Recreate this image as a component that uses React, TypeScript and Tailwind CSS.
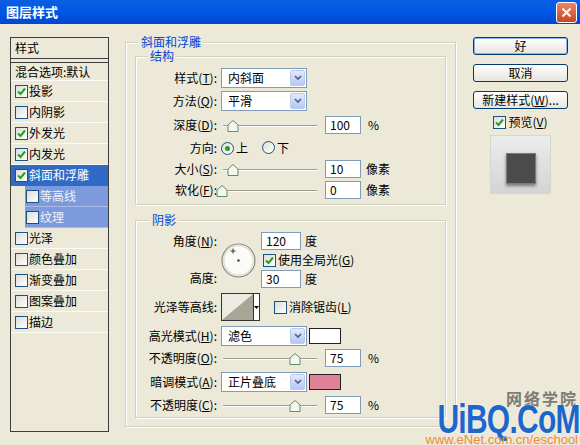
import clsx from "clsx";

const effects = [
  { name: "投影", on: true },
  { name: "内阴影" },
  { name: "外发光", on: true },
  { name: "内发光", on: true },
  { name: "斜面和浮雕", on: true, selected: true },
  { name: "等高线", sub: true },
  { name: "纹理", sub: true },
  { name: "光泽" },
  { name: "颜色叠加" },
  { name: "渐变叠加" },
  { name: "图案叠加" },
  { name: "描边" },
];

function Check({ on, className }: { on?: boolean; className?: string }) {
  return (
    <span
      className={clsx(
        "inline-flex h-[13px] w-[13px] shrink-0 items-center justify-center border border-[#1c5180] bg-linear-to-br from-[#dcdcd7] to-white",
        className
      )}
    >
      {on && (
        <svg width="9" height="9" viewBox="0 0 9 9">
          <path d="M1 4.5 L3.5 7 L8 1.5" stroke="#21a121" strokeWidth="2" fill="none" />
        </svg>
      )}
    </span>
  );
}

function Radio({ on }: { on?: boolean }) {
  return (
    <span className="inline-flex h-[13px] w-[13px] shrink-0 items-center justify-center rounded-full border border-[#1c5180] bg-linear-to-br from-[#dcdcd7] to-white">
      {on && <span className="h-[5px] w-[5px] rounded-full bg-[#21a121]" />}
    </span>
  );
}

function Select({ value }: { value: string }) {
  return (
    <div className="flex h-[20px] w-[86px] shrink-0 items-center border border-[#7f9db9] bg-white">
      <span className="flex-1 pl-[6px]">{value}</span>
      <span className="mr-[1px] flex h-[16px] w-[15px] items-center justify-center rounded-[2px] border border-[#b9c9ef] bg-linear-to-b from-[#e2eafd] to-[#b4c8f4]">
        <svg width="8" height="6" viewBox="0 0 8 6">
          <path d="M1 1 L4 4 L7 1" stroke="#4d6185" strokeWidth="1.6" fill="none" />
        </svg>
      </span>
    </div>
  );
}

function Field({ value, w = "w-[36px]" }: { value: string; w?: string }) {
  return (
    <div className={clsx("flex h-[18px] shrink-0 items-center border border-[#7f9db9] bg-white pl-[4px]", w)}>
      {value}
    </div>
  );
}

function Slider({ pos }: { pos: number }) {
  return (
    <div className="relative h-[14px] w-[96px] shrink-0">
      <div className="absolute left-[2px] right-0 top-[7px] h-[2px] border-t border-b border-t-[#9d9d92] border-b-white" />
      <svg
        className="absolute top-[2px]"
        style={{ left: pos - 6 }}
        width="12"
        height="12"
        viewBox="0 0 12 12"
      >
        <path d="M6 0.5 L11 5 L11 11.5 L1 11.5 L1 5 Z" fill="#f7f7f2" stroke="#5f8b6e" strokeWidth="1" />
      </svg>
    </div>
  );
}

function Label({ children }: { children: React.ReactNode }) {
  return <div className="w-[81px] shrink-0 text-right">{children}</div>;
}

function GroupTitle({ children, ml }: { children: React.ReactNode; ml: string }) {
  return (
    <div className={clsx("-mt-[7px] w-fit bg-[#ece9d8] px-[3px] leading-[12px] text-[#0046d5]", ml)}>
      {children}
    </div>
  );
}

const box = "border border-[#d0d0bf] shadow-[inset_1px_1px_0_#fff,1px_1px_0_#fff]";

export default function App() {
  return (
    <div className="relative h-[445px] w-[580px] overflow-hidden bg-[#ece9d8] font-['Noto_Sans_CJK_SC',sans-serif] text-[12px] leading-[14px] text-black">
      {/* title bar */}
      <div className="flex h-[24px] items-center justify-between bg-linear-to-b from-[#0b5fe3] via-[#0057e4] to-[#0046cf] pl-[6px] pr-[3px]">
        <span className="text-[13px] font-bold text-white">图层样式</span>
        <span className="flex h-[21px] w-[21px] items-center justify-center rounded-[3px] border border-white bg-linear-to-b from-[#e8866a] to-[#c8441f]">
          <svg width="11" height="11" viewBox="0 0 11 11">
            <path d="M1.5 1.5 L9.5 9.5 M9.5 1.5 L1.5 9.5" stroke="white" strokeWidth="2" />
          </svg>
        </span>
      </div>

      <div className="flex items-start pl-[10px] pt-[13px]">
        {/* effects list */}
        <div className="flex h-[395px] w-[99px] shrink-0 flex-col border border-[#3f3f3f]">
          <div className="flex h-[21px] items-center border-b border-[#3f3f3f] pl-[4px]">样式</div>
          <div className="mt-[3px] flex h-[19px] items-center border-t border-b border-t-[#3f3f3f] border-b-[#fbfaf5] pl-[4px]">
            混合选项:默认
          </div>
          {effects.map((e) => (
            <div
              key={e.name}
              className={clsx(
                "flex h-[21px] items-center gap-[1px] border-b",
                e.selected && "border-[#316ac5] bg-[#316ac5] pl-[4px] text-white",
                e.sub && "ml-[14px] border-[#a9bbe6] bg-[#7d9bdc] pl-[1px] text-[#eef2fb]",
                !e.selected && !e.sub && "border-[#fbfaf5] pl-[4px]"
              )}
            >
              <Check on={e.on} />
              <span>{e.name}</span>
            </div>
          ))}
        </div>

        {/* bevel and emboss */}
        <div className={clsx("ml-[16px] mt-[5px] w-[331px] shrink-0 px-[9px] pb-[8px]", box)}>
          <GroupTitle ml="ml-[3px]">斜面和浮雕</GroupTitle>

          <div className={clsx("mt-[8px] pb-[3px]", box)}>
            <GroupTitle ml="ml-[11px]">结构</GroupTitle>
            <div className="mt-[5px] flex flex-col">
              <div className="flex h-[22px] items-center gap-[4px]">
                <Label>
                  样式(<u>T</u>):
                </Label>
                <Select value="内斜面" />
              </div>
              <div className="flex h-[24px] items-center gap-[4px]">
                <Label>
                  方法(<u>Q</u>):
                </Label>
                <Select value="平滑" />
              </div>
              <div className="flex h-[24px] items-center gap-[4px]">
                <Label>
                  深度(<u>D</u>):
                </Label>
                <Slider pos={12} />
                <div className="ml-[4px]">
                  <Field value="100" />
                </div>
                <span className="ml-[3px]">%</span>
              </div>
              <div className="flex h-[22px] items-center gap-[4px]">
                <Label>方向:</Label>
                <Radio on />
                <span className="-ml-[2px]">上</span>
                <span className="ml-[10px]">
                  <Radio />
                </span>
                <span className="-ml-[2px]">下</span>
              </div>
              <div className="flex h-[20px] items-center gap-[4px]">
                <Label>
                  大小(<u>S</u>):
                </Label>
                <Slider pos={12} />
                <div className="ml-[4px]">
                  <Field value="10" />
                </div>
                <span className="ml-[1px]">像素</span>
              </div>
              <div className="flex h-[22px] items-center gap-[4px]">
                <Label>
                  软化(<u>F</u>):
                </Label>
                <Slider pos={1} />
                <div className="ml-[4px]">
                  <Field value="0" />
                </div>
                <span className="ml-[1px]">像素</span>
              </div>
            </div>
          </div>

          <div className={clsx("mt-[15px] pb-[1px]", box)}>
            <GroupTitle ml="ml-[13px]">阴影</GroupTitle>
            <div className="mt-[5px] flex flex-col">
              <div className="flex h-[57px] items-start">
                <div className="flex h-[57px] w-[81px] flex-col justify-between">
                  <div className="flex h-[20px] items-center justify-end">
                    角度(<u>N</u>):
                  </div>
                  <div className="flex h-[20px] items-center justify-end">高度:</div>
                </div>
                <svg className="ml-[4px] mt-[12px]" width="35" height="35" viewBox="0 0 35 35">
                  <circle cx="17.5" cy="17.5" r="16.5" fill="#fbfbf8" stroke="#8a8a80" strokeWidth="1.2" />
                  <circle cx="17.5" cy="17.5" r="14.8" fill="none" stroke="#e2e0d6" strokeWidth="1.5" />
                  <rect x="16.5" y="16.5" width="2" height="2" fill="#111" />
                  <path d="M12 5.5 V10.5 M9.5 8 H14.5" stroke="#333" strokeWidth="1" />
                </svg>
                <div className="ml-[5px] flex flex-col pt-[1px]">
                  <div className="flex items-center">
                    <Field value="120" w="w-[40px]" />
                    <span className="ml-[4px]">度</span>
                  </div>
                  <div className="flex h-[20px] items-center gap-[2px] pl-[2px]">
                    <Check on />
                    <span>
                      使用全局光(<u>G</u>)
                    </span>
                  </div>
                  <div className="flex items-center">
                    <Field value="30" w="w-[40px]" />
                    <span className="ml-[4px]">度</span>
                  </div>
                </div>
              </div>

              <div className="mt-[4px] flex h-[30px] items-center gap-[4px]">
                <Label>光泽等高线:</Label>
                <div className="flex h-[28px] items-stretch border border-[#333]">
                  <svg width="31" height="26" viewBox="0 0 31 26">
                    <rect width="31" height="26" fill="#ecebe2" />
                    <polygon points="0,26 31,0 31,26" fill="#a8a597" />
                  </svg>
                  <div className="flex w-[6px] items-center justify-center border-l border-[#333] bg-white">
                    <svg width="5" height="3" viewBox="0 0 5 3">
                      <polygon points="0,0 5,0 2.5,3" fill="#000" />
                    </svg>
                  </div>
                </div>
                <div className="ml-[10px] flex items-center gap-[2px]">
                  <Check />
                  <span>
                    消除锯齿(<u>L</u>)
                  </span>
                </div>
              </div>

              <div className="mt-[3px] flex h-[22px] items-center gap-[4px]">
                <Label>
                  高光模式(<u>H</u>):
                </Label>
                <Select value="滤色" />
                <div className="-ml-[2px] h-[16px] w-[32px] border border-[#222] bg-white" />
              </div>
              <div className="flex h-[22px] items-center gap-[4px]">
                <Label>
                  不透明度(<u>O</u>):
                </Label>
                <Slider pos={74} />
                <div className="ml-[4px]">
                  <Field value="75" />
                </div>
                <span className="ml-[3px]">%</span>
              </div>
              <div className="mt-[2px] flex h-[22px] items-center gap-[4px]">
                <Label>
                  暗调模式(<u>A</u>):
                </Label>
                <Select value="正片叠底" />
                <div className="-ml-[2px] h-[16px] w-[32px] border border-[#222] bg-[#df8197]" />
              </div>
              <div className="mt-[1px] flex h-[22px] items-center gap-[4px]">
                <Label>
                  不透明度(<u>C</u>):
                </Label>
                <Slider pos={74} />
                <div className="ml-[4px]">
                  <Field value="75" />
                </div>
                <span className="ml-[3px]">%</span>
              </div>
            </div>
          </div>
        </div>

        {/* buttons */}
        <div className="ml-[17px] flex w-[95px] shrink-0 flex-col">
          <button className="h-[18px] w-full rounded-[3px] border border-[#003c74] bg-linear-to-b from-white to-[#e6e5de] shadow-[inset_0_0_0_1px_#8db2ee]">
            好
          </button>
          <button className="mt-[9px] h-[18px] w-full rounded-[3px] border border-[#003c74] bg-linear-to-b from-white to-[#e6e5de]">
            取消
          </button>
          <button className="mt-[9px] h-[18px] w-full rounded-[3px] border border-[#003c74] bg-linear-to-b from-white to-[#e6e5de]">
            新建样式(<u>W</u>)...
          </button>
          <div className="mt-[6px] flex h-[14px] items-center justify-center gap-[2px]">
            <Check on />
            <span>
              预览(<u>V</u>)
            </span>
          </div>
          <div className="mx-auto mt-[6px] flex h-[59px] w-[61px] justify-center border border-[#d6d6d0] bg-linear-to-b from-[#ececec] to-[#d4d4d4] pt-[17px]">
            <div className="h-[31px] w-[30px] border border-[#7a7a7a] bg-[#4b4b4b] shadow-[0_2px_3px_rgba(0,0,0,0.45)]" />
          </div>
        </div>
      </div>

      {/* watermark */}
      <div className="absolute bottom-0 right-0 flex h-[48px] w-[160px] flex-col items-end">
        <span className="absolute right-[2px] top-[-8px] text-[16px] leading-[18px] font-bold tracking-[2px] text-[#7c7c78]">
          网络学院
        </span>
        <span className="relative mt-[8px] origin-right scale-x-75 font-['Liberation_Sans',sans-serif] text-[40px] leading-[28px] font-bold tracking-[-1px] text-[#1d66cc] [text-shadow:0_0_2px_#fff]">
          UiBQ.CoM
        </span>
        <span className="relative mt-[1px] pr-[2px] font-['Liberation_Sans',sans-serif] text-[13px] leading-[12px] text-[#f08a3a]">
          www.eNet.com.cn/eschool
        </span>
      </div>
    </div>
  );
}
